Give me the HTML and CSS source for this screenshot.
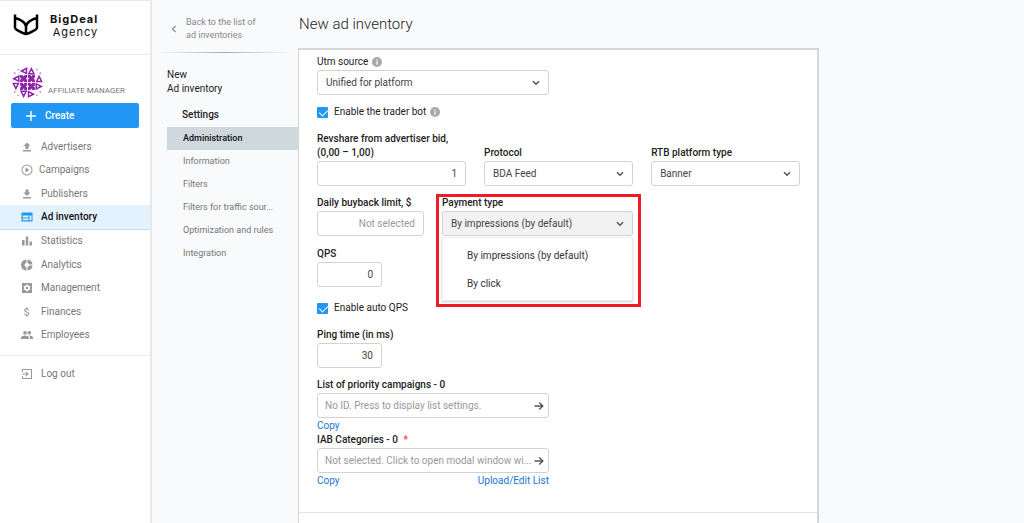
FILE: index.html
```html
<!DOCTYPE html>
<html lang="en">
<head>
<meta charset="utf-8">
<meta name="viewport" content="width=device-width, initial-scale=1">
<title>New ad inventory</title>
<link rel="stylesheet" href="styles.css">
</head>
<body>
<svg class="sprite" aria-hidden="true">
  <symbol id="chevron" viewBox="0 0 8 6"><path d="M1 1.2l3 3 3-3" fill="none" stroke="currentColor" stroke-width="1.5"/></symbol>
  <symbol id="arrow" viewBox="0 0 10 10"><path d="M.5 5h8M5.2 1.4L8.8 5 5.2 8.6" fill="none" stroke="currentColor" stroke-width="1.4"/></symbol>
  <symbol id="info" viewBox="0 0 10 10"><circle cx="5" cy="5" r="5" fill="#a9a9a9"/><path d="M4.400 2.200h1.200v1.200H4.400zM4.400 4.300h1.200v3.500H4.400z" fill="#fff"/></symbol>
  <symbol id="tri" viewBox="0 0 7 7"><path fill-rule="evenodd" d="M3.5 0L7 7H0zM3.5 3.200L2.200 5.400h2.600z"/></symbol>
  <symbol id="star" viewBox="0 0 7 7"><path d="M.3.3h2.200l1 1.200 1-1.200h2.200v2.200l-1.200 1 1.200 1v2.200H4.500l-1-1.200-1 1.200H.3V4.500l1.200-1-1.200-1z"/></symbol>
</svg>
<div class="app">
  <aside class="sidebar">
    <div class="brand">
      <svg class="brand-mark" viewBox="0 0 26 22" aria-hidden="true"><path d="M2 .5v13.200c0 1.600 8.500 6.300 11 6.300s11-4.700 11-6.300V.5M2 4.200c4 .3 11 4.200 11 8.300 0-4.100 7-8 11-8.300M13 11.500V20" fill="none" stroke="#000" stroke-width="2.500"/></svg>
      <div class="brand-name"><b>BigDeal</b><span>Agency</span></div>
    </div>
    <div class="user">
      <svg class="avatar" viewBox="1 1 28 28" fill="#8e24aa" aria-hidden="true">
        <use href="#tri" width="7" height="7" transform="translate(8 8) rotate(-90)"/>
        <use href="#tri" x="15" y="1" width="7" height="7"/>
        <use href="#tri" width="7" height="7" transform="translate(1 15) rotate(-90)"/>
        <use href="#star" x="8" y="8" width="7" height="7"/>
        <use href="#star" x="15" y="8" width="7" height="7"/>
        <use href="#tri" x="22" y="8" width="7" height="7"/>
        <use href="#tri" width="7" height="7" transform="translate(8 22) rotate(180)"/>
        <use href="#star" x="8" y="15" width="7" height="7"/>
        <use href="#star" x="15" y="15" width="7" height="7"/>
        <use href="#tri" width="7" height="7" transform="translate(29 15) rotate(90)"/>
        <use href="#tri" width="7" height="7" transform="translate(15 29) rotate(180)"/>
        <use href="#tri" width="7" height="7" transform="translate(22 22) rotate(90)"/>
        <path d="M6 3h1v1H6zM3 6h1v1H3zM23 3h1v1h-1zM26 6h1v1h-1zM3 23h1v1H3zM6 26h1v1H6zM26 23h1v1h-1zM23 26h1v1h-1z"/>
      </svg>
      <span class="role">AFFILIATE MANAGER</span>
    </div>
    <button class="create" type="button">
      <svg viewBox="0 0 10 10" aria-hidden="true"><path d="M5 0v10M0 5h10" stroke="#fff" stroke-width="1.400"/></svg>Create
    </button>
    <nav class="menu" aria-label="Main">
      <a href="#"><svg viewBox="0 0 24 24"><path d="M4 21h16v-3H4zM9 16h6v-6h4l-7-7-7 7h4z"/></svg>Advertisers</a>
      <a href="#" class="wide"><svg viewBox="0 0 24 24"><path fill-rule="evenodd" d="M12 1a11 11 0 100 22 11 11 0 000-22zm0 20a9 9 0 110-18 9 9 0 010 18zM9 7v10l7.500-5z"/></svg>Campaigns</a>
      <a href="#"><svg viewBox="0 0 24 24"><path d="M19 9h-4V3H9v6H5l7 7zM4 18v3h16v-3z"/></svg>Publishers</a>
      <a href="#" class="active" aria-current="page"><svg viewBox="0 0 24 24"><path fill-rule="evenodd" d="M1 3v18h22V3zM15 18.500H3.500v-3.500H15zM15 13H3.500V9H15zM21 18.500h-4V9h4z"/></svg>Ad inventory</a>
      <a href="#"><svg viewBox="0 0 24 24"><path d="M2 10h5v11H2zM9.500 3h5v18h-5zM17 13h5v8h-5z"/></svg>Statistics</a>
      <a href="#"><svg viewBox="0 0 24 24"><path d="M11 1v7a4 4 0 000 8v7A11 11 0 0111 1zM13 1v7a4 4 0 013 3h7A11 11 0 0013 1zM13 16v7a11 11 0 0010-10h-7a4 4 0 01-3 3z"/></svg>Analytics</a>
      <a href="#"><svg viewBox="0 0 24 24"><path fill-rule="evenodd" d="M2 2h20v20H2zM10.500 5l-.4 2.200-1.500.9-2.100-.8L5 9.900l1.700 1.400v1.500L5 14.200l1.500 2.500 2.100-.8 1.500.9.400 2.200h3l.4-2.200 1.500-.9 2.100.8 1.500-2.500-1.700-1.400v-1.500L19 9.900l-1.500-2.600-2.100.8-1.500-.9-.4-2.200zM12 9.500a2.500 2.500 0 110 5 2.500 2.500 0 010-5z"/></svg>Management</a>
      <a href="#"><svg viewBox="0 0 24 24"><path d="M11.800 10.900c-2.300-.6-3-1.200-3-2.100 0-1.100 1-1.900 2.700-1.900 1.800 0 2.400.9 2.500 2.100h2.200c-.1-1.700-1.100-3.300-3.200-3.800V3h-3v2.200C8.100 5.600 6.500 6.800 6.500 8.800c0 2.300 1.900 3.500 4.700 4.200 2.500.6 3 1.500 3 2.400 0 .7-.5 1.700-2.700 1.700-2.100 0-2.900-.9-3-2.100H6.300c.1 2.200 1.800 3.400 3.700 3.800V21h3v-2.100c1.900-.4 3.500-1.500 3.500-3.500 0-2.800-2.400-3.800-4.700-4.500z"/></svg>Finances</a>
      <a href="#"><svg viewBox="0 0 24 24"><circle cx="8" cy="7.500" r="3.700"/><circle cx="16.500" cy="7.500" r="3.700"/><path d="M8 13c-2.700 0-8 1.400-8 4v3h16v-3c0-2.600-5.300-4-8-4zM16.500 13l-1 .1c1.200.8 2.500 2.100 2.500 3.900v3h6v-3c0-2.600-4.800-4-7.500-4z"/></svg>Employees</a>
    </nav>
    <div class="menu menu-exit">
      <a href="#"><svg viewBox="0 0 24 24"><path fill-rule="evenodd" d="M2 2h20v20H2v-6h2v4h16V4H4v4H2zM10.500 7l5 5-5 5L9 15.500l2.500-2.500H2v-2h9.500L9 8.500z"/></svg>Log out</a>
    </div>
  </aside>

  <div class="subnav">
    <a class="back" href="#"><svg viewBox="0 0 6 8" aria-hidden="true"><path d="M4.700.8L1.500 4l3.200 3.200" fill="none" stroke="currentColor" stroke-width="1.200"/></svg><span>Back to the list of<br>ad inventories</span></a>
    <div class="crumb">New<br>Ad inventory</div>
    <h2>Settings</h2>
    <nav class="sections" aria-label="Settings">
      <a href="#" class="active">Administration</a>
      <a href="#">Information</a>
      <a href="#">Filters</a>
      <a href="#">Filters for traffic sour...</a>
      <a href="#">Optimization and rules</a>
      <a href="#">Integration</a>
    </nav>
  </div>

  <main class="main">
    <h1>New ad inventory</h1>
    <form class="card">
      <div class="fields">
        <div class="field half">
          <label class="light" for="utm">Utm source <svg class="info"><use href="#info"/></svg></label>
          <div class="control"><select id="utm"><option>Unified for platform</option></select><svg class="chev"><use href="#chevron"/></svg></div>
        </div>
        <label class="check"><input type="checkbox" checked>Enable the trader bot <svg class="info"><use href="#info"/></svg></label>
        <div class="trio">
          <div class="field"><label for="rev">Revshare from advertiser bid,<br>(0,00 – 1,00)</label><div class="control"><input id="rev" class="num" type="text" value="1"></div></div>
          <div class="field"><label for="proto">Protocol</label><div class="control"><select id="proto"><option>BDA Feed</option></select><svg class="chev"><use href="#chevron"/></svg></div></div>
          <div class="field"><label for="rtb">RTB platform type</label><div class="control"><select id="rtb"><option>Banner</option></select><svg class="chev"><use href="#chevron"/></svg></div></div>
        </div>
        <div class="trio limits">
          <div class="limit-row">
            <div class="field daily"><label for="daily">Daily buyback limit, $</label><div class="control"><input id="daily" class="num" type="text" placeholder="Not selected"></div></div>
            <div class="field payment">
              <label for="pay">Payment type</label>
              <div class="control"><select id="pay" class="open"><option>By impressions (by default)</option><option>By click</option></select><svg class="chev"><use href="#chevron"/></svg></div>
              <div class="dropdown" role="listbox" aria-label="Payment type"><div role="option" aria-selected="true">By impressions (by default)</div><div role="option" aria-selected="false">By click</div></div>
            </div>
          </div>
        </div>
        <div class="field small qps"><label for="qps">QPS</label><div class="control"><input id="qps" class="num" type="text" value="0"></div></div>
        <label class="check auto"><input type="checkbox" checked>Enable auto QPS</label>
        <div class="field small"><label for="ping">Ping time (in ms)</label><div class="control"><input id="ping" class="num" type="text" value="30"></div></div>
        <div class="field half list">
          <label for="prio">List of priority campaigns - 0</label>
          <div class="control"><input id="prio" class="picker" type="text" readonly placeholder="No ID. Press to display list settings."><button type="button" class="go" aria-label="Open list"><svg><use href="#arrow"/></svg></button></div>
          <div class="links"><a href="#">Copy</a></div>
        </div>
        <div class="field half">
          <label for="iab">IAB Categories - 0 <span class="req">*</span></label>
          <div class="control"><input id="iab" class="picker" type="text" readonly placeholder="Not selected. Click to open modal window wi..."><button type="button" class="go" aria-label="Open categories"><svg><use href="#arrow"/></svg></button></div>
          <div class="links"><a href="#">Copy</a><a href="#">Upload/Edit List</a></div>
        </div>
      </div>
    </form>
  </main>
</div>
</body>
</html>
```
FILE: styles.css
```css
* { box-sizing: border-box; }
body { margin: 0; background: #f9fafc; color: #333; font: 10px/14px Roboto, "Liberation Sans", sans-serif; }
a { color: inherit; text-decoration: none; }
svg { display: block; flex: none; }
.sprite { position: absolute; width: 0; height: 0; }
.app { display: grid; grid-template-columns: 152px 146px minmax(0, 1fr); min-height: 100vh; }

.sidebar { background: #fff; border-top: 1px solid #e6e8eb; border-right: 2px solid #e6e8eb; }
.brand { display: flex; gap: 11px; padding: 12px 0 15px 13px; border-bottom: 1px solid #e3eaf0; }
.brand-mark { width: 26px; height: 24px; }
.brand-name { display: flex; flex-direction: column; align-items: flex-end; color: #111; font: 11px/13px Inter, sans-serif; letter-spacing: 1px; }
.user { display: flex; align-items: flex-end; gap: 5px; padding: 12px 0 0 12px; }
.avatar { width: 31px; height: 31px; }
.role { color: #777; font-size: 8px; line-height: 14px; }
.create { display: flex; align-items: center; gap: 9px; width: 128px; height: 25px; margin: 5px 0 0 11px; padding: 0 15px; border: 0; border-radius: 2px; background: #2196f3; color: #fff; font: 500 10px Roboto, sans-serif; }
.create svg { width: 10px; height: 10px; }
.menu { display: flex; flex-direction: column; height: 212px; margin-top: 7px; color: #777; }
.menu a { display: flex; flex: 1; align-items: center; gap: 8px; padding-left: 21px; }
.menu a.wide { gap: 6px; }
.menu svg { width: 12px; height: 12px; fill: #999; }
.menu a.active { background: #e3f2fd; border-bottom: 1px solid #bbdefb; color: #111; font-weight: 500; }
.menu a.active svg { fill: #2196f3; }
.menu-exit { height: 37px; margin-top: 8px; border-top: 1px solid #e8ecef; }

.subnav { padding-top: 16px; }
.back { display: flex; align-items: center; gap: 9px; padding: 0 0 10px 19px; color: #888; font-size: 9px; line-height: 13px; }
.back svg { width: 6px; height: 8px; }
.crumb { margin: 0 8px 0 7px; padding: 15px 0 0 8px; border-top: 1px solid; border-image: linear-gradient(90deg, transparent, #aaa, transparent) 1; color: #222; }
.subnav h2 { margin: 12px 0 5px 30px; color: #222; font-size: 10px; font-weight: 500; }
.sections { margin-left: 15px; color: #777; font-size: 9px; }
.sections a { display: block; padding-left: 16px; line-height: 23px; }
.sections a.active { background: #cfd8dc; color: #111; font-weight: 500; }

.main { display: flex; flex-direction: column; padding-right: 20vw; }
h1 { margin: 0 0 0 1px; padding: 14px 0; color: #222; font-size: 15px; font-weight: 300; line-height: 20px; }
.card { flex: 1; border: solid #d5d6d7; border-width: 2px 2px 0 1px; background: #fff; }
.fields { padding: 5px 17px 24px 18px; border-bottom: 1px solid #e4e4e4; }
.field label { display: block; padding-bottom: 1px; color: #222; font-weight: 500; white-space: nowrap; }
.field label.light { display: flex; align-items: center; gap: 4px; font-weight: 400; }
.half { width: 48%; }
.small { width: 65px; }
.info { width: 10px; height: 10px; }
.control { position: relative; height: 25px; }
.control input, .control select { width: 100%; height: 25px; padding: 0 8px; border: 1px solid #d2d2d2; border-radius: 3px; background: #fff; color: #444; font: 10px Roboto, sans-serif; outline: 0; appearance: none; }
.control .open { background: #f2f2f2; }
.control .num { text-align: right; }
.control .picker { padding: 0 14px 0 7px; }
::placeholder { color: #999; opacity: 1; }
.chev { position: absolute; top: 10px; right: 9px; width: 8px; height: 6px; color: #555; pointer-events: none; }
.go { position: absolute; top: 0; right: 0; width: 20px; height: 25px; padding: 0 5px; border: 0; background: none; color: #555; }
.go svg { width: 10px; height: 10px; }
.check { display: flex; align-items: center; gap: 4px; margin: 10px 0 13px; color: #222; }
.check input { position: relative; width: 11px; height: 11px; margin: 0 2px 0 0; border-radius: 1px; background: #2196f3; appearance: none; }
.check input:checked::after { content: ""; position: absolute; top: 1px; left: 4px; width: 4px; height: 7px; border: solid #fff; border-width: 0 1px 1px 0; transform: rotate(45deg); }
.trio { display: grid; grid-template-columns: repeat(3, minmax(0, 1fr)); align-items: end; column-gap: 18px; }
.limits { margin-top: 10px; }
.limit-row { grid-column: span 2; display: flex; gap: 18px; }
.daily { width: 107px; }
.payment { position: relative; flex: 1; }
.payment::after { content: ""; position: absolute; z-index: 2; inset: -2px -8px -71px -6px; border: 3px solid #ee1c24; pointer-events: none; }
.dropdown { position: absolute; z-index: 1; top: 41px; left: 0; right: 0; padding: 4px 0 2px; border: 1px solid #eee; background: #fff; box-shadow: 0 1px 2px rgba(0, 0, 0, .2); color: #333; }
.dropdown div { padding-left: 24px; line-height: 28px; }
.qps { margin-top: 11px; }
.auto { margin: 14px 0 13px; }
.list { margin-top: 10px; }
.links { display: flex; justify-content: space-between; color: #1976d2; line-height: 15px; }
.req { margin-left: 3px; color: #f44336; }
```
